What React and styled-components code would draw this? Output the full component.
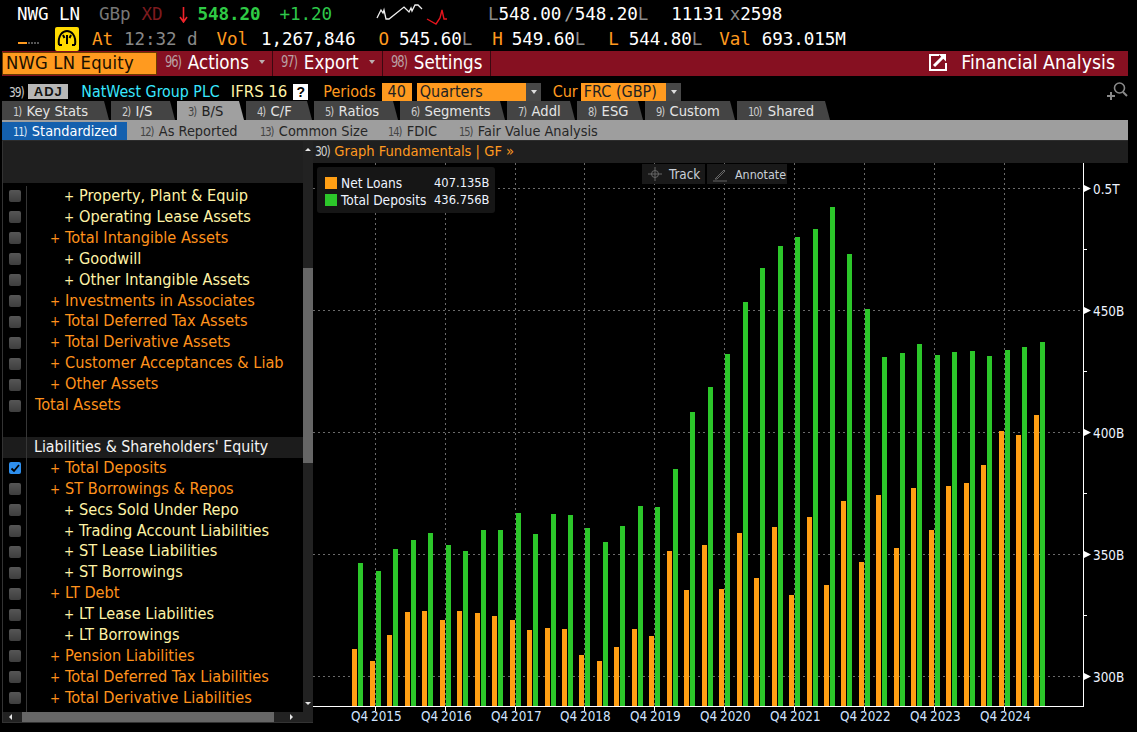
import React from "react";
import styled, { createGlobalStyle } from "styled-components";

const UI = `"DejaVu Sans Condensed", "DejaVu Sans", sans-serif`;
const MONO = `"DejaVu Sans Mono", monospace`;
const ORANGE = "#ff9a1f";
const CREAM = "#fff3a6";

const Global = createGlobalStyle`
  html, body { margin: 0; background: #000; }
  * { box-sizing: border-box; }
`;

const Page = styled.div`
  width: 1137px; height: 732px; overflow: hidden; background: #000;
  display: flex; flex-direction: column; font-family: ${UI}; font-size: 15px; color: #fff;
`;
const QuoteRow = styled.div`
  height: ${(p) => p.$h}px; padding-top: ${(p) => p.$pt || 0}px; display: flex; align-items: center;
  font-family: ${MONO}; font-size: 17.6px; white-space: nowrap; letter-spacing: -0.1px;
`;
const Q = styled.span`
  margin-left: ${(p) => p.$ml || 0}px;
  color: ${(p) => p.$c || "#fff"};
  font-weight: ${(p) => (p.$b ? 700 : 400)};
`;
const ActionBar = styled.div`
  height: 25px; margin: 0 9px 0 2px; background: #861021; display: flex; align-items: stretch;
`;
const SecurityBox = styled.div`
  width: 155px; margin: 1px 0; background: ${ORANGE}; border: 1px solid #6b3b00; color: #1a0f00;
  font-size: 18.3px; line-height: 20px; padding-left: 3px; letter-spacing: .2px;
`;
const MenuButton = styled.div`
  width: ${(p) => p.$w}px; margin-left: 1px; border-right: 1px solid #3a0810;
  display: flex; align-items: center; padding: 0 0 3px 7px; gap: 5px; font-size: 18.6px; color: #fff;
`;
const Num = styled.span`
  display: inline-block;
  color: ${(p) => p.$c || "#b9a0a4"};
  font-size: ${(p) => p.$s || 14}px;
  letter-spacing: -1.2px; transform: scaleX(.85); transform-origin: left;
  margin-left: ${(p) => p.$ml || 0}px;
  margin-right: ${(p) => p.$mr || 0}px;
`;
const Caret = styled.span`
  width: 0; height: 0; border-left: 3px solid transparent; border-right: 3px solid transparent;
  border-top: 4px solid ${(p) => p.$c || "#bdaeb0"}; margin-left: ${(p) => p.$ml || 5}px;
`;
const RightTitle = styled.div`
  margin-left: auto; display: flex; align-items: center; gap: 14px; padding: 0 13px 3px 0; font-size: 19.4px;
`;
const ControlRow = styled.div`
  height: 19px; margin-top: 6px; display: flex; align-items: center; white-space: nowrap; font-size: 16px;
`;
const Ctl = styled.span`
  margin-left: ${(p) => p.$ml || 0}px; color: ${(p) => p.$c || "#fff"}; font-size: ${(p) => p.$s || 16}px;
`;
const AdjBox = styled.span`
  margin-left: ${(p) => p.$ml}px; width: 40px; height: 15px; background: #b7b7b7; color: #111;
  font: 700 13px "Liberation Sans", sans-serif; letter-spacing: 1px; display: flex; align-items: center; justify-content: center;
`;
const HelpBox = styled.span`
  margin-left: 6px; width: 15px; height: 16px; background: #fff; color: #000;
  font: 700 14px "Liberation Sans", sans-serif; display: flex; align-items: center; justify-content: center;
`;
const Field = styled.span`
  margin-left: ${(p) => p.$ml || 0}px; width: ${(p) => p.$w}px; height: 18px; background: ${ORANGE}; color: #222;
  padding: 0 3px; line-height: 18px; text-align: ${(p) => p.$align || "left"};
`;
const Drop = styled.span`
  width: 15px; height: 18px; background: #484848; display: flex; align-items: center; justify-content: center;
`;
const SearchSlot = styled.span`
  margin-left: auto; margin-right: 9px; height: 19px; display: flex;
`;
const TabRow = styled.div`
  height: 19px; padding-left: 2px; display: flex; gap: 2px;
`;
const Tab = styled.div`
  width: ${(p) => p.$w}px; height: 19px; background: ${(p) => (p.$active ? "#a0a0a0" : "#444")};
  color: ${(p) => (p.$active ? "#222" : "#e4e4e4")};
  clip-path: polygon(0 0, calc(100% - 5px) 0, 100% 100%, 0 100%);
  padding-left: 11px; line-height: 20px; font-size: 14.6px; white-space: nowrap;
`;
const SubRow = styled.div`
  height: 21px; margin: 0 9px 0 2px; background: #9e9e9e; padding-top: 2px; border-bottom: 1px solid #2c2c2c;
  display: flex; align-items: stretch;
`;
const SubTab = styled.div`
  width: ${(p) => p.$w}px; background: ${(p) => (p.$active ? "#1460ae" : "transparent")};
  color: ${(p) => (p.$active ? "#fff" : "#262626")}; padding-left: ${(p) => (p.$active ? 11 : 0)}px;
  line-height: 18px; font-size: 14.4px; white-space: nowrap; margin-right: ${(p) => p.$mr || 0}px;
`;
const Body = styled.div`
  flex: 1; min-height: 0; margin: 0 9px 9px 2px; display: grid; grid-template-columns: 311px 1fr;
`;
const LeftPanel = styled.div`
  min-height: 0; background: #000; border-left: 1px solid #333; border-bottom: 1px solid #333;
  display: grid; grid-template-columns: 1fr 10px; grid-template-rows: 1fr 10px; overflow: hidden;
`;
const ListPane = styled.div`
  overflow: hidden; min-height: 0; display: flex; flex-direction: column;
`;
const PaneHeader = styled.div`
  flex: none; height: 42px; margin-bottom: 3px; background: #1f1f1f;
`;
const ListRow = styled.div`
  flex: none; height: 20.92px; display: grid; grid-template-columns: 24px 1fr; white-space: nowrap;
  background: ${(p) => (p.$head ? "#1c1c1c" : "transparent")};
`;
const CheckCell = styled.div`
  display: flex; align-items: center; padding-left: 6px; border-right: 1px solid #363636;
`;
const Check = styled.span`
  width: 12px; height: 12px; border-radius: 2px;
  background: ${(p) => (p.$on ? "#2e8fee" : "linear-gradient(#565656,#3e3e3e)")};
  display: flex; align-items: center; justify-content: center;
`;
const RowText = styled.div`
  padding-left: ${(p) => [8, 23, 37, 7][p.$lvl]}px;
  color: ${(p) => (p.$lvl === 2 ? CREAM : p.$lvl === 3 ? "#f4f4f4" : "#ff921c")};
  line-height: 20.9px; font-size: ${(p) => (p.$lvl === 3 ? 15.8 : 16.2)}px; display: flex;
`;
const Plus = styled.span`
  width: ${(p) => (p.$sub ? 15 : 15)}px; flex: none; font-size: 13.5px;
`;
const VScroll = styled.div`
  background: #222; display: flex; flex-direction: column; position: relative; padding-top: 127px;
`;
const VThumb = styled.div`
  height: 195px; background: #666;
`;
const Arrow = styled.span`
  position: absolute; width: 0; height: 0;
  ${(p) => p.$pos};
  border: 3.5px solid transparent;
  ${(p) => `border-${p.$dir}-color: #e6e6e6;`}
`;
const HScroll = styled.div`
  grid-column: 1 / 3; background: #222; position: relative; padding-left: 19px;
`;
const HThumb = styled.div`
  width: 252px; height: 10px; background: #666;
`;
const RightPanel = styled.div`
  display: flex; flex-direction: column; min-height: 0;
`;
const GraphHeader = styled.div`
  flex: none; height: 22px; background: #1f1f1f; color: ${ORANGE}; line-height: 20px; padding-left: 2px;
  font-size: 14.6px; white-space: nowrap;
`;
const ChartWrap = styled.div`
  flex: 1; position: relative; min-height: 0; background: #000;
`;
const Legend = styled.div`
  position: absolute; left: 4px; top: 4px; width: 178px; height: 46px; background: #161616; border-radius: 3px;
  padding: 7px 0 0 8px; display: grid; grid-template-columns: 16px 93px auto; grid-auto-rows: 17px; align-items: center;
  font-size: 13.6px; color: #eef4ff; white-space: nowrap;
`;
const LegendValue = styled.span`
  font-size: 12.8px;
`;
const Swatch = styled.span`
  width: 12px; height: 12px; background: ${(p) => p.$c};
`;
const ChartTool = styled.div`
  position: absolute; top: 1px; left: ${(p) => p.$x}px; width: ${(p) => p.$w}px; height: 20px; background: #191919;
  display: flex; align-items: center; gap: ${(p) => p.$gap}px; padding-left: 5px; font-size: ${(p) => p.$s}px; color: #c9d0d8;
`;

const orangeTops = [649,661,635,612,611,620,611,613,616,620,630,628,629,655,661,647,629,636,551,590,545,589,533,578,527,595,517,585,501,562,495,548,488,530,486,483,465,431,435,415];
const orangeX = [352,370,387,405,422,440,457,475,492,510,527,545,562,579,597,614,632,649,667,684,702,719,737,754,772,789,807,824,841,859,876,894,911,929,946,964,981,999,1016,1034];
const greenTops = [563,571,549,540,533,545,551,530,530,513,534,514,515,528,542,526,506,507,469,412,387,354,302,268,246,237,229,207,254,309,357,353,344,355,352,351,356,350,347,342];
const greenX = [358,376,393,411,428,446,463,481,498,516,533,551,568,585,603,620,638,655,673,690,708,725,743,760,778,795,813,830,847,865,882,900,917,935,952,970,987,1005,1022,1040];

const X0 = 313, Y0 = 163, BASE = 706, AXIS = 1083;
const hGrid = [[188.5,"0.5T"],[310.5,"450B"],[432.5,"400B"],[554.5,"350B"],[676.5,"300B"]];
const minor = [249,371,493,615];
const vGrid = [[375,"2015"],[445,"2016"],[515,"2017"],[584,"2018"],[654,"2019"],[724,"2020"],[794,"2021"],[864,"2022"],[934,"2023"],[1004,"2024"]];

function Chart() {
  return (
    <svg width="815" height="560" viewBox={`${X0} ${Y0} 815 560`} style={{ display: "block" }}>
      {hGrid.map(([y]) => (
        <line key={y} x1={X0} x2={AXIS} y1={y} y2={y} stroke="#6a6a6a" strokeDasharray="2 3" />
      ))}
      {vGrid.map(([x]) => (
        <line key={x} x1={x + 0.5} x2={x + 0.5} y1={Y0} y2={BASE} stroke="#6a6a6a" strokeDasharray="2 3" />
      ))}
      {orangeX.map((x, i) => <rect key={x} x={x} y={orangeTops[i]} width="5" height={BASE - orangeTops[i]} fill="#ff9f14" />)}
      {greenX.map((x, i) => <rect key={x} x={x} y={greenTops[i]} width="5" height={BASE - greenTops[i]} fill="#2cc72a" />)}
      <line x1={X0} x2={AXIS + 1} y1={BASE + 0.5} y2={BASE + 0.5} stroke="#fff" />
      <line x1={AXIS + 0.5} x2={AXIS + 0.5} y1={Y0} y2={BASE + 1} stroke="#fff" />
      {minor.map((y) => <line key={y} x1={AXIS} x2={AXIS + 4} y1={y + 0.5} y2={y + 0.5} stroke="#fff" />)}
      {hGrid.map(([y, t]) => (
        <g key={t}>
          <polygon points={`${AXIS + 1},${y - 3.5} ${AXIS + 8},${y} ${AXIS + 1},${y + 3.5}`} fill="#fff" />
          <text x={AXIS + 10} y={y + 5} fill="#eef4ff" fontFamily={UI} fontSize="13.4">{t}</text>
        </g>
      ))}
      {vGrid.map(([x, t]) => (
        <g key={t} fontFamily={UI} fontSize="13.4" fill="#cfe4ff">
          <line x1={x + 0.5} x2={x + 0.5} y1={BASE} y2={BASE + 5} stroke="#fff" />
          <text x={x - 24} y={721}>Q4</text>
          <text x={x - 4} y={721}>{t}</text>
        </g>
      ))}
    </svg>
  );
}

const rows = [
  [2,"Property, Plant & Equip"],[2,"Operating Lease Assets"],[1,"Total Intangible Assets"],[2,"Goodwill"],[2,"Other Intangible Assets"],
  [1,"Investments in Associates"],[1,"Total Deferred Tax Assets"],[1,"Total Derivative Assets"],[1,"Customer Acceptances & Liab"],[1,"Other Assets"],
  [0,"Total Assets"],[-1,""],[3,"Liabilities & Shareholders' Equity"],[1,"Total Deposits",true],[1,"ST Borrowings & Repos"],[2,"Secs Sold Under Repo"],
  [2,"Trading Account Liabilities"],[2,"ST Lease Liabilities"],[2,"ST Borrowings"],[1,"LT Debt"],[2,"LT Lease Liabilities"],[2,"LT Borrowings"],
  [1,"Pension Liabilities"],[1,"Total Deferred Tax Liabilities"],[1,"Total Derivative Liabilities"],[1,"Other Liabilities"],
];

const tabs = [["1)","Key Stats",107],["2)","I/S",64],["3)","B/S",67,true],["4)","C/F",66],["5)","Ratios",84],["6)","Segments",105],["7)","Addl",68],["8)","ESG",66],["9)","Custom",90],["10)","Shared",93]];

export default function App() {
  return (
    <Page>
      <Global />
      <QuoteRow $h={26} $pt={2}>
        <Q $ml={17}>NWG LN</Q>
        <Q $ml={19} $c="#777">GBp</Q>
        <Q $ml={11} $c="#7d1b1f">XD</Q>
        <svg width="9" height="17" viewBox="0 0 9 17" style={{ marginLeft: 17 }}>
          <path d="M4.5 1V15M1 11l3.500 5 3.500-5" stroke="#f0232b" strokeWidth="1.6" fill="none" />
        </svg>
        <Q $ml={9} $c="#2fcb45" $b>548.20</Q>
        <Q $ml={19} $c="#2ec84a">+1.20</Q>
        <svg width="76" height="24" viewBox="376 0 76 24" style={{ marginLeft: 43, marginTop: -2 }}>
          <path d="M378 17L382 9l2 3 1-3 2 9h3L405 6l5 5 2-4 1 3 3-6h3l4 4" stroke="#eee" strokeWidth="1.300" fill="none" />
          <path d="M428 18l9 5 4-6 2-8 2 9h3" stroke="#e5141c" strokeWidth="1.400" fill="none" />
        </svg>
        <Q $ml={37} $c="#888">L</Q><Q>548.00</Q><Q $ml={3} $c="#aaa">/</Q><Q>548.20</Q><Q $c="#888">L</Q>
        <Q $ml={23}>11131</Q><Q $ml={6} $c="#888">x</Q><Q>2598</Q>
      </QuoteRow>
      <QuoteRow $h={25}>
        <svg width="22" height="4" viewBox="0 0 22 4" style={{ marginLeft: 18, marginTop: 10 }}>
          <rect width="9" height="2" fill={ORANGE} />
          {[10, 13, 16, 19].map((x) => <rect key={x} x={x} width="2" height="2" fill="#555" />)}
        </svg>
        <svg width="24" height="24" viewBox="0 0 24 24" style={{ marginLeft: 15 }}>
          <rect width="24" height="24" rx="2" fill="#ffdb00" />
          <path d="M4 18C2.500 8 8 4 12 4s9.500 4 8 14" stroke="#000" strokeWidth="2" fill="none" />
          <path d="M4 18h3M17 18h3M8 8l1.500 3M16 8l-1.500 3M12 8v9" stroke="#000" strokeWidth="2" fill="none" />
        </svg>
        <Q $ml={13} $c={ORANGE}>At</Q>
        <Q $ml={11} $c="#888">12:32 d</Q>
        <Q $ml={19} $c={ORANGE}>Vol</Q>
        <Q $ml={13}>1,267,846</Q>
        <Q $ml={23} $c={ORANGE}>O</Q>
        <Q $ml={10}>545.60</Q><Q $c="#888">L</Q>
        <Q $ml={20} $c={ORANGE}>H</Q>
        <Q $ml={9}>549.60</Q><Q $c="#888">L</Q>
        <Q $ml={23} $c={ORANGE}>L</Q>
        <Q $ml={10}>544.80</Q><Q $c="#888">L</Q>
        <Q $ml={17} $c={ORANGE}>Val</Q>
        <Q $ml={11}>693.015M</Q>
      </QuoteRow>
      <ActionBar>
        <SecurityBox>NWG LN Equity</SecurityBox>
        <MenuButton $w={115}><Num $s={15} $mr={-1}>96)</Num>Actions<Caret /></MenuButton>
        <MenuButton $w={109}><Num $s={15} $mr={-1}>97)</Num>Export<Caret /></MenuButton>
        <MenuButton $w={107}><Num $s={15} $mr={-1}>98)</Num>Settings</MenuButton>
        <RightTitle>
          <svg width="18" height="18" viewBox="0 0 18 18">
            <path d="M10 2H1v15h16V10" stroke="#fff" strokeWidth="2" fill="none" />
            <path d="M5 13l10-10" stroke="#fff" strokeWidth="3" fill="none" />
            <path d="M9.500 1H17V8.500z" fill="#fff" />
          </svg>
          Financial Analysis
        </RightTitle>
      </ActionBar>
      <ControlRow>
        <Num $c="#ccc" $s={14} $ml={9}>39)</Num>
        <AdjBox $ml={2}>ADJ</AdjBox>
        <Ctl $ml={13} $c="#38e8ff" $s={15.8}>NatWest Group PLC</Ctl>
        <Ctl $ml={11} $c={CREAM} $s={16.6}>IFRS 16</Ctl>
        <HelpBox>?</HelpBox>
        <Ctl $ml={15} $c={ORANGE}>Periods</Ctl>
        <Field $ml={6} $w={30} $align="center">40</Field>
        <Field $ml={5} $w={109}>Quarters</Field>
        <Drop><Caret $ml={1} $c="#ddd" /></Drop>
        <Ctl $ml={12} $c={ORANGE}>Cur</Ctl>
        <Field $ml={3} $w={85}>FRC (GBP)</Field>
        <Drop><Caret $ml={1} $c="#ddd" /></Drop>
        <SearchSlot>
          <svg width="22" height="19" viewBox="1106 82 22 19">
            <circle cx="1119.500" cy="88" r="5" stroke="#8a8a8a" strokeWidth="1.600" fill="none" />
            <path d="M1123 92l4 4" stroke="#8a8a8a" strokeWidth="2" />
            <path d="M1107 96h8M1111 92v8" stroke="#8a8a8a" strokeWidth="2" />
          </svg>
        </SearchSlot>
      </ControlRow>
      <TabRow>
        {tabs.map(([n, t, w, a]) => (
          <Tab key={t} $w={w} $active={a}><Num $c={a ? "#444" : "#ccc"} $s={13} $mr={4}>{n}</Num>{t}</Tab>
        ))}
      </TabRow>
      <SubRow>
        <SubTab $w={125} $active $mr={13}><Num $c="#dfe9f5" $s={13} $mr={3}>11)</Num>Standardized</SubTab>
        <SubTab $w={120}><Num $c="#444" $s={13} $mr={3}>12)</Num>As Reported</SubTab>
        <SubTab $w={128}><Num $c="#444" $s={13} $mr={3}>13)</Num>Common Size</SubTab>
        <SubTab $w={71}><Num $c="#444" $s={13} $mr={3}>14)</Num>FDIC</SubTab>
        <SubTab $w={200}><Num $c="#444" $s={13} $mr={3}>15)</Num>Fair Value Analysis</SubTab>
      </SubRow>
      <Body>
        <LeftPanel>
          <ListPane>
            <PaneHeader />
            {rows.map(([lvl, t, on], i) => (
              <ListRow key={i} $head={lvl === 3}>
                <CheckCell>
                  {lvl !== -1 && lvl !== 3 && (
                    <Check $on={on}>
                      {on && (
                        <svg width="10" height="10" viewBox="0 0 10 10">
                          <path d="M1.500 5.500l2.500 2.500 5-6" stroke="#000" strokeWidth="1.800" fill="none" />
                        </svg>
                      )}
                    </Check>
                  )}
                </CheckCell>
                {lvl !== -1 && (
                  <RowText $lvl={lvl}>
                    {(lvl === 1 || lvl === 2) && <Plus $sub={lvl === 2}>+</Plus>}
                    {t}
                  </RowText>
                )}
              </ListRow>
            ))}
          </ListPane>
          <VScroll>
            <Arrow $dir="bottom" $pos="left:1.500px; top:3.500px;" />
            <Arrow $dir="top" $pos="left:1.500px; bottom:4px;" />
            <VThumb />
          </VScroll>
          <HScroll>
            <Arrow $dir="right" $pos="left:2.500px; top:1.500px;" />
            <Arrow $dir="left" $pos="left:287px; top:1.500px;" />
            <HThumb />
          </HScroll>
        </LeftPanel>
        <RightPanel>
          <GraphHeader><Num $c="#d0d0d0" $s={14} $mr={2}>30)</Num>Graph Fundamentals | GF »</GraphHeader>
          <ChartWrap>
            <Chart />
            <Legend>
              <Swatch $c="#ff9f14" /><span>Net Loans</span><LegendValue>407.135B</LegendValue>
              <Swatch $c="#2cc72a" /><span>Total Deposits</span><LegendValue>436.756B</LegendValue>
            </Legend>
            <ChartTool $x={329} $w={63} $gap={6} $s={13.4}>
              <svg width="16" height="16" viewBox="0 0 16 16">
                <circle cx="8" cy="8" r="3.500" stroke="#666" fill="none" /><path d="M8 1v14M1 8h14" stroke="#666" />
              </svg>
              <span>Track</span>
            </ChartTool>
            <ChartTool $x={394} $w={80} $gap={7} $s={12.4}>
              <svg width="16" height="16" viewBox="0 0 16 16">
                <path d="M3 13L12 4l1 1-8 8zM1 15h14" stroke="#666" fill="none" />
              </svg>
              <span>Annotate</span>
            </ChartTool>
          </ChartWrap>
        </RightPanel>
      </Body>
    </Page>
  );
}
